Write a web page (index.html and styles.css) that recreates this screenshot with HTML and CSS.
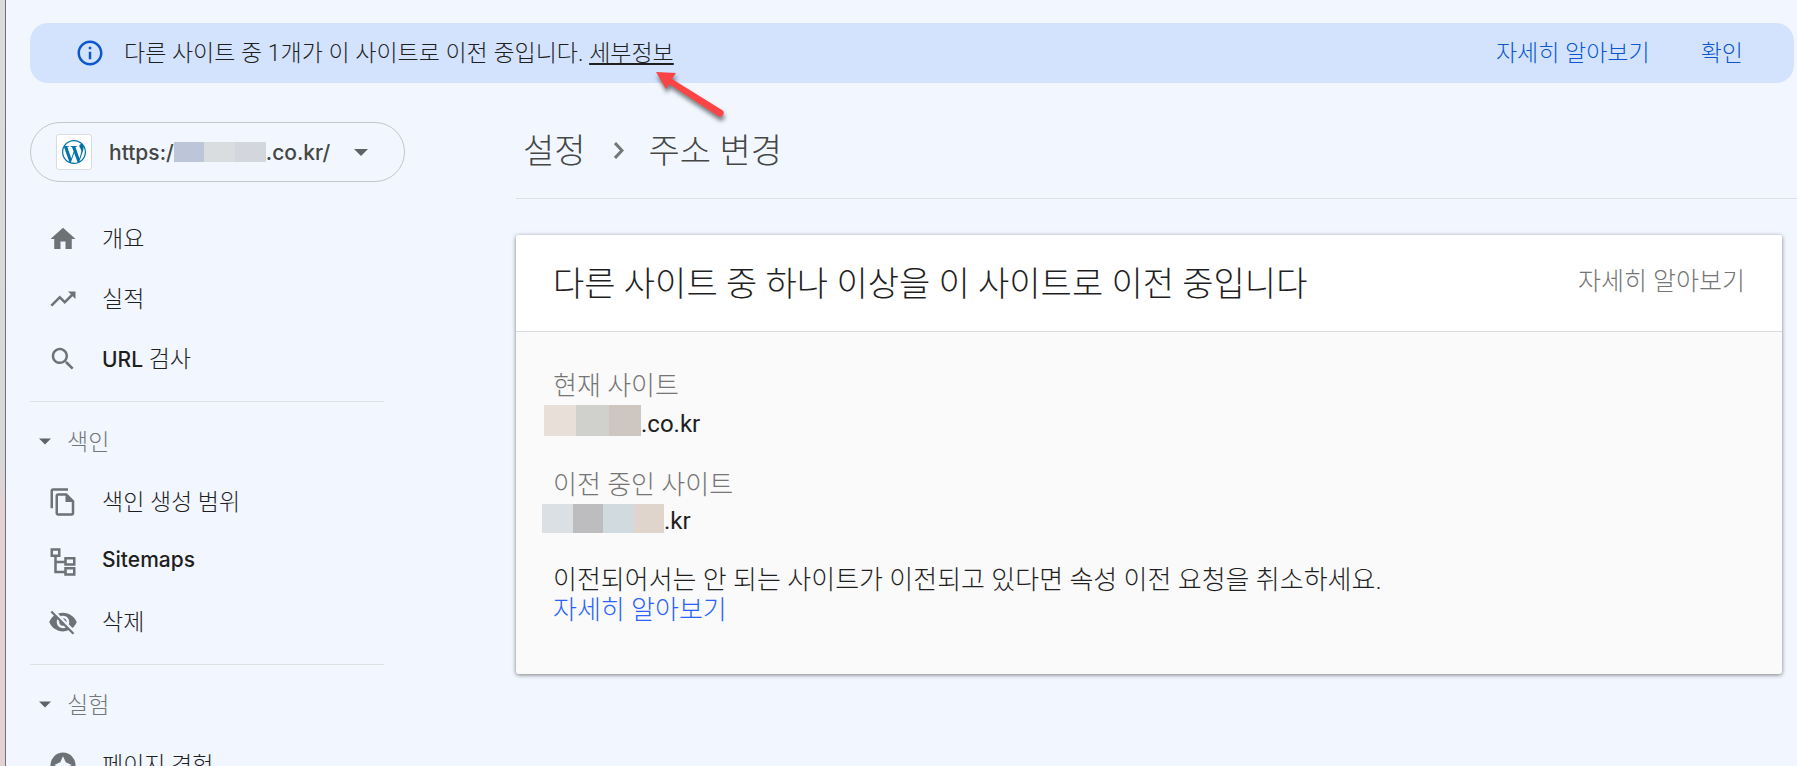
FILE: index.html
```
<!DOCTYPE html>
<html lang="ko">

<head>
    <meta charset="utf-8">
    <meta name="viewport" content="width=device-width, initial-scale=1.0">
    <title>주소 변경</title>

    <link rel="stylesheet" href="styles.css">
</head>

<body>
    <div class="edge"></div>
    <div class="page">

        <div class="banner">
            <svg class="info" viewBox="0 0 24 24"><path d="M11 7h2v2h-2zm0 4h2v6h-2zm1-9C6.480 2 2 6.480 2 12s4.480 10 10 10 10-4.480 10-10S17.520 2 12 2zm0 18c-4.410 0-8-3.590-8-8s3.590-8 8-8 8 3.590 8 8-3.590 8-8 8z"/></svg>
            <p class="message">다른 사이트 중 1개가 이 사이트로 이전 중입니다. <span class="pointed"><a class="details" href="#">세부정보</a><svg class="arrow" viewBox="0 0 76 52"><path d="M2 1l20 1-4 6 50 31a3 3 0 0 1-4 6L15 13l-3 5z"/></svg></span></p>
            <a class="banner-link" href="#">자세히 알아보기</a>
            <button class="banner-link" type="button">확인</button>
        </div>

        <div class="columns">
            <aside class="sidebar">
                <button class="property" type="button">
                    <span class="favicon">
                        <svg viewBox="0 0 24 24"><path d="M21.469 6.825c.84 1.537 1.318 3.300 1.318 5.175 0 3.979-2.156 7.456-5.363 9.325l3.295-9.527c.615-1.540.82-2.771.82-3.864 0-.405-.026-.78-.07-1.110m-7.981.105c.647-.03 1.232-.105 1.232-.105.582-.075.514-.93-.067-.899 0 0-1.755.135-2.880.135-1.064 0-2.850-.15-2.850-.15-.585-.03-.661.855-.075.885 0 0 .54.061 1.125.09l1.680 4.605-2.370 7.080L5.354 6.900c.649-.03 1.234-.1 1.234-.1.585-.075.516-.93-.065-.896 0 0-1.746.138-2.874.138-.2 0-.438-.008-.69-.015C4.911 3.150 8.235 1.215 12 1.215c2.809 0 5.365 1.072 7.286 2.833-.046-.003-.091-.009-.141-.009-1.060 0-1.812.923-1.812 1.914 0 .89.513 1.643 1.060 2.531.411.72.89 1.643.89 2.977 0 .915-.354 1.994-.821 3.479l-1.075 3.585-3.900-11.610zM12 22.784c-1.059 0-2.081-.153-3.048-.437l3.237-9.406 3.315 9.087c.024.053.05.101.078.149-1.120.393-2.325.609-3.582.609M1.211 12c0-1.564.336-3.050.935-4.390L7.290 21.709C3.694 19.960 1.212 16.271 1.211 12M12 0C5.385 0 0 5.385 0 12s5.385 12 12 12 12-5.385 12-12S18.615 0 12 0"/></svg>
                    </span>
                    <span class="url latin">https:/<span class="mosaic mosaic-url"><i></i><i></i><i></i></span>.co.kr/</span>
                    <svg class="caret" viewBox="0 0 14 7"><path d="M0 0h14L7 7z"/></svg>
                </button>

                <nav>
                    <a class="item" href="#"><svg viewBox="0 0 24 24"><path d="M10 20v-6h4v6h5v-8h3L12 3 2 12h3v8z"/></svg>개요</a>
                    <a class="item" href="#"><svg viewBox="0 0 24 24"><path d="M16 6l2.290 2.290-4.880 4.880-4-4L2 16.590 3.410 18l6-6 4 4 6.300-6.290L22 12V6z"/></svg>실적</a>
                    <a class="item" href="#"><svg viewBox="0 0 24 24"><path d="M15.500 14h-.79l-.28-.27C15.410 12.590 16 11.110 16 9.500 16 5.910 13.090 3 9.500 3S3 5.910 3 9.500 5.910 16 9.500 16c1.610 0 3.090-.59 4.230-1.570l.27.28v.79l5 4.990L20.490 19l-4.990-5zm-6 0C7.010 14 5 11.990 5 9.500S7.010 5 9.500 5 14 7.010 14 9.500 11.990 14 9.500 14z"/></svg><span><span class="latin">URL</span> 검사</span></a>

                    <hr>
                    <button class="group" type="button"><svg viewBox="0 0 14 7"><path d="M0 0h14L7 7z"/></svg>색인</button>
                    <a class="item" href="#"><svg viewBox="0 0 24 24"><path d="M16 1H4c-1.100 0-2 .9-2 2v14h2V3h12V1zm-1 4l6 6v10c0 1.100-.9 2-2 2H7.990C6.890 23 6 22.100 6 21l.01-14c0-1.100.89-2 1.990-2h7zM8 7v14h11v-9h-5V7z" fill-rule="evenodd"/></svg>색인 생성 범위</a>
                    <a class="item" href="#"><svg viewBox="0 0 24 24"><path d="M2 1h8v7H7v3h6V8h9v7h-9v-2H7v6h6v-3h9v7h-9v-2H5V8H2zm2 2v3h4V3zm11 7v3h5v-3zm0 8v3h5v-3z" fill-rule="evenodd"/></svg><span class="latin">Sitemaps</span></a>
                    <a class="item" href="#"><svg viewBox="0 0 24 24"><path d="M12 7c2.760 0 5 2.240 5 5 0 .65-.13 1.260-.36 1.830l2.920 2.920c1.510-1.260 2.700-2.890 3.430-4.750-1.730-4.390-6-7.500-11-7.500-1.400 0-2.740.25-3.980.7l2.160 2.160C10.740 7.130 11.350 7 12 7zM2 4.270l2.740 2.740C3.080 8.300 1.780 10.020 1 12c1.730 4.390 6 7.500 11 7.500 1.550 0 3.030-.3 4.380-.84L19.730 22 21 20.730 3.270 3 2 4.270zM7.530 9.800l1.550 1.550c-.05.21-.08.43-.08.65 0 1.660 1.340 3 3 3 .22 0 .44-.03.65-.08l1.550 1.550c-.67.33-1.410.53-2.200.53-2.760 0-5-2.240-5-5 0-.79.2-1.530.53-2.200zm4.310-.78l3.150 3.150.02-.16c0-1.660-1.340-3-3-3l-.17.01z"/></svg>삭제</a>

                    <hr>
                    <button class="group" type="button"><svg viewBox="0 0 14 7"><path d="M0 0h14L7 7z"/></svg>실험</button>
                    <a class="item" href="#"><svg viewBox="0 0 24 24"><path d="M12 2a10 10 0 1 0 0 20 10 10 0 0 0 0-20zm0 3l2.200 4.800L19 12l-4.800 2.200L12 19l-2.200-4.800L5 12l4.800-2.200z" fill-rule="evenodd"/></svg>페이지 경험</a>
                </nav>
            </aside>

            <main>
                <header class="crumbs">
                    <a href="#">설정</a>
                    <svg viewBox="0 0 10 17"><path d="M1 1l7 7.500L1 16"/></svg>
                    <h1>주소 변경</h1>
                </header>

                <section class="card">
                    <div class="card-head">
                        <h2>다른 사이트 중 하나 이상을 이 사이트로 이전 중입니다</h2>
                        <a href="#">자세히 알아보기</a>
                    </div>
                    <div class="card-body">
                        <dl>
                            <dt>현재 사이트</dt>
                            <dd><span class="mosaic mosaic-current"><i></i><i></i><i></i></span>.co.kr</dd>
                            <dt>이전 중인 사이트</dt>
                            <dd><span class="mosaic mosaic-moving"><i></i><i></i><i></i><i></i></span>.kr</dd>
                        </dl>
                        <p>이전되어서는 안 되는 사이트가 이전되고 있다면 속성 이전 요청을 취소하세요.<br><a href="#">자세히 알아보기</a></p>
                    </div>
                </section>
            </main>
        </div>
    </div>
</body>

</html>
```
FILE: styles.css
```
* {
    box-sizing: border-box;
}

body {
    display: flex;
    height: 100vh;
    margin: 0;
    overflow: hidden;
    background: #f2f6fe;
    color: #1f1f1f;
    font-family: Roboto, "Noto Sans CJK KR", sans-serif;
    font-size: 23px;
    font-weight: 300;
}

a {
    color: inherit;
    text-decoration: none;
}

button {
    padding: 0;
    border: none;
    background: none;
    color: inherit;
    font: inherit;
    cursor: pointer;
}

svg {
    flex: none;
    fill: currentColor;
}

.latin {
    font-family: Inter, sans-serif;
    font-size: 21px;
    font-weight: 500;
}

.edge {
    flex: none;
    width: 6px;
    border-right: 1px solid #6f7275;
    background: linear-gradient(#dcdcdc, #d8d8d8 60%, #e2d2d4 66%, #e2d2d4);
}

.page {
    flex: 1;
    min-width: 0;
    padding-top: 23px;
}

/* banner */

.banner {
    display: flex;
    align-items: center;
    height: 60px;
    margin: 0 3px 0 24px;
    padding: 0 51px 0 45px;
    border-radius: 18px;
    background: #d3e3fd;
}

.info {
    width: 30px;
    height: 30px;
    margin-right: 19px;
    color: #0b57d0;
}

.message {
    flex: 1;
    margin: 0;
    padding-bottom: 5px;
}

.pointed {
    position: relative;
}

.details {
    text-decoration: underline;
    text-decoration-thickness: 2px;
    text-underline-offset: 2px;
}

.arrow {
    position: absolute;
    left: 65px;
    top: 31px;
    width: 76px;
    height: 52px;
    color: #fc4444;
    filter: drop-shadow(1px 4px 2px rgba(0, 0, 0, 0.5));
}

.banner-link {
    margin-left: 51px;
    padding-bottom: 5px;
    color: #0b57d0;
}

/* sidebar */

.columns {
    display: flex;
}

.sidebar {
    flex: none;
    width: 510px;
    padding: 39px 0 0 24px;
}

.property {
    display: flex;
    align-items: center;
    width: 375px;
    height: 60px;
    padding: 0 36px 0 25px;
    border: 1px solid #c4c7c5;
    border-radius: 30px;
    color: #444746;
}

.favicon {
    display: flex;
    align-items: center;
    justify-content: center;
    width: 36px;
    height: 36px;
    margin-right: 17px;
    border: 1px solid #dadce0;
    border-radius: 3px;
    background: #fff;
    color: #0073aa;
}

.favicon svg {
    width: 24px;
    height: 24px;
}

.url {
    display: flex;
    align-items: center;
}

.caret {
    width: 14px;
    height: 7px;
    margin-left: auto;
    color: #5f6368;
}

.mosaic {
    display: inline-flex;
    flex: none;
    vertical-align: -4px;
}

.mosaic i {
    flex: 1;
}

.mosaic-url {
    width: 92px;
    height: 20px;
}

.mosaic-url i:nth-child(1) { background: #bcc6d8; }
.mosaic-url i:nth-child(2) { background: #dadddf; }
.mosaic-url i:nth-child(3) { background: #d3d6dc; }

nav {
    width: 354px;
    padding-top: 26px;
}

.item {
    display: flex;
    align-items: center;
    height: 60px;
    padding: 0 0 3px 18px;
}

.item svg {
    width: 30px;
    height: 30px;
    margin: 4px 24px 0 0;
    color: #6e7175;
}

hr {
    height: 1px;
    margin: 13px 0 9px;
    border: none;
    background: #dfe1e4;
}

.group {
    display: flex;
    align-items: center;
    height: 60px;
    padding: 0 0 3px 9px;
    color: #747775;
}

.group svg {
    width: 12px;
    height: 7px;
    margin: 4px 16px 0 0;
    color: #5f6368;
}

/* main column */

main {
    flex: 1;
    min-width: 0;
}

.crumbs {
    display: flex;
    align-items: center;
    height: 116px;
    padding: 15px 8px 0 7px;
    border-bottom: 1px solid #dcdfe3;
    color: #444746;
    font-size: 34px;
}

.crumbs svg {
    width: 10px;
    height: 17px;
    margin: 4px 25px 0 28px;
    fill: none;
    stroke: #747775;
    stroke-width: 3;
}

h1,
h2 {
    margin: 0;
    font-size: 34px;
    font-weight: inherit;
}

.card {
    margin: 36px 15px 0 0;
    border-radius: 3px;
    background: #fafafa;
    box-shadow: 0 1px 4px rgba(0, 0, 0, 0.5);
    font-size: 26px;
}

.card-head {
    display: flex;
    align-items: center;
    justify-content: space-between;
    height: 97px;
    padding: 0 37px 4px;
    border-bottom: 1px solid #dadce0;
    border-radius: 3px 3px 0 0;
    background: #fff;
}

.card-head a {
    padding-bottom: 4px;
    color: #757575;
    font-size: 25px;
}

.card-body {
    padding: 35px 37px 49px;
    line-height: 38px;
}

dl,
dd,
.card-body p {
    margin: 0;
}

dt {
    color: #757575;
}

dd {
    height: 37px;
    margin-bottom: 24px;
    font-size: 24px;
    font-weight: 400;
    line-height: 34px;
}

.mosaic-current {
    width: 97px;
    height: 31px;
    margin-left: -9px;
}

.mosaic-current i:nth-child(1) { background: #e8e0d8; }
.mosaic-current i:nth-child(2) { background: #d0d0cc; }
.mosaic-current i:nth-child(3) { background: #cec6c0; }

.mosaic-moving {
    width: 122px;
    height: 29px;
    margin-left: -11px;
}

.mosaic-moving i:nth-child(1) { background: #dbe0e4; }
.mosaic-moving i:nth-child(2) { background: #bdbdbf; }
.mosaic-moving i:nth-child(3) { background: #d0dadf; }
.mosaic-moving i:nth-child(4) { background: #dfd5cc; }

.card-body p {
    line-height: 30px;
}

.card-body p a {
    color: #2962ff;
}
```
